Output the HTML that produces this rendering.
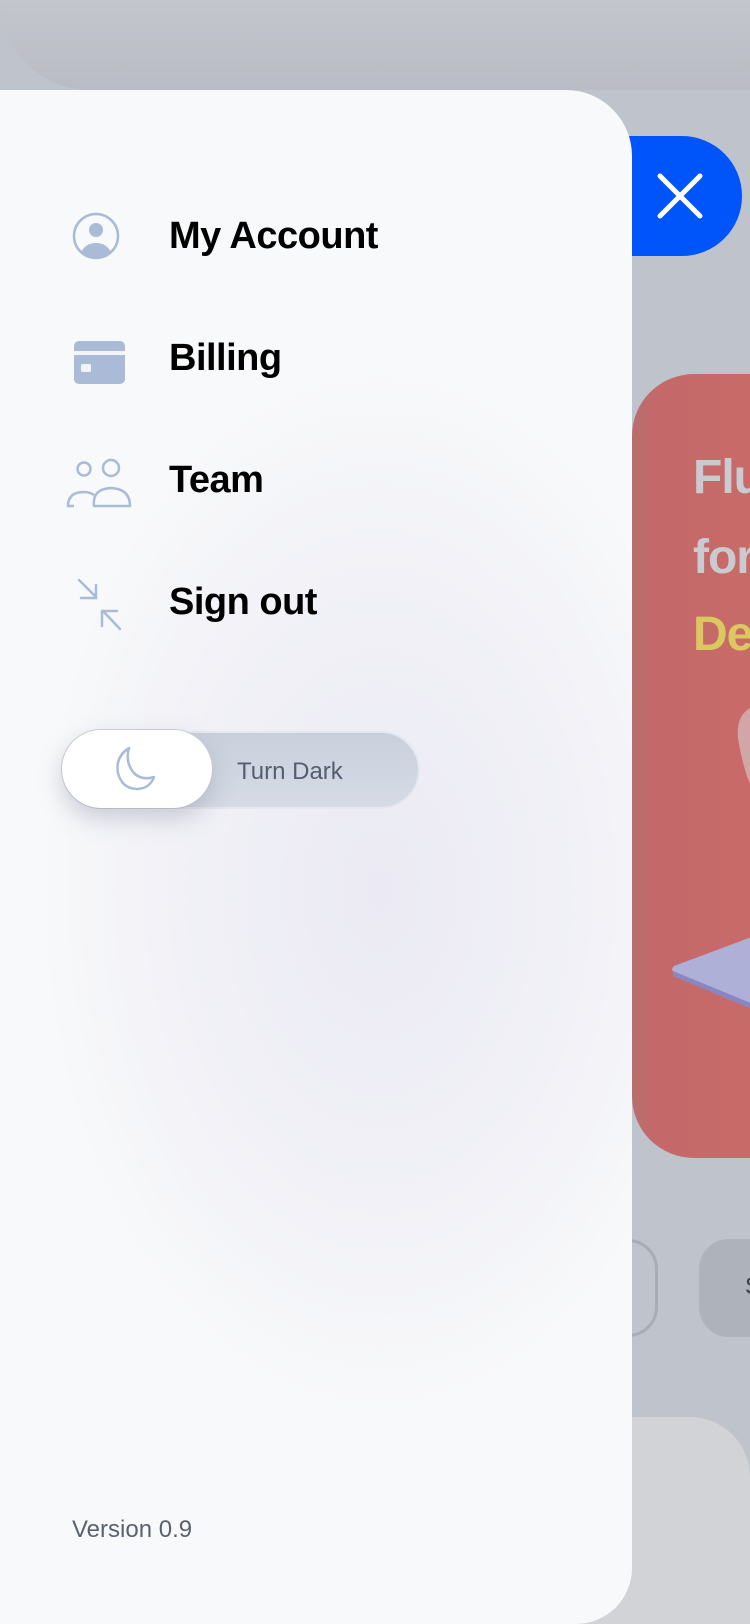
<!DOCTYPE html>
<html><head><meta charset="utf-8"><style>
*{margin:0;padding:0;box-sizing:border-box}
html,body{width:750px;height:1624px;overflow:hidden}
body{position:relative;background:#bfc3cb;font-family:"Liberation Sans",sans-serif}
.top{position:absolute;left:0;top:0;width:750px;height:90px;background:linear-gradient(180deg,#c3c6cd,#b9bcc4);border-bottom-left-radius:90px}
.xbtn{position:absolute;left:560px;top:136px;width:182px;height:120px;background:#0055fa;border-radius:60px}
.red{position:absolute;left:632px;top:374px;width:118px;height:784px;overflow:hidden;background:linear-gradient(90deg,#b86e6e,#c4686a 20%,#c86a68);border-top-left-radius:62px;border-bottom-left-radius:62px}
.red .t{position:absolute;left:61px;font-weight:bold;font-size:48px;color:#c9cbd0;white-space:nowrap;letter-spacing:-1px}
.btn1{position:absolute;left:560px;top:1239px;width:98px;height:98px;border:3px solid #a9acb4;border-radius:30px}
.btn2{position:absolute;left:699px;top:1239px;width:51px;height:98px;background:#aeb2ba;border-radius:30px 0 0 30px;font-size:24px;color:#3a3f4c;padding:34px 0 0 46px;overflow:hidden}
.bot{position:absolute;left:560px;top:1417px;width:190px;height:207px;background:#d2d3d6;border-top-right-radius:60px}
.panel{position:absolute;left:0;top:90px;height:1534px;width:632px;background:radial-gradient(ellipse 340px 520px at 380px 800px,#ebeaf4,#f1f1f7 60%,#f8f9fa);border-top-right-radius:66px;border-bottom-right-radius:56px;z-index:2}
.item{position:absolute;left:169px;font-weight:bold;font-size:38px;color:#000;line-height:40px;letter-spacing:-0.5px}
.ic{position:absolute}
.tog{position:absolute;left:62px;top:731px;width:358px;height:78px;border-radius:39px;background:linear-gradient(180deg,#c9d0dc,#d6dbe5);border:2px solid #e5e8ef}
.knob{position:absolute;left:62px;top:730px;width:150px;height:78px;border-radius:39px;background:#fff;box-shadow:0 10px 24px rgba(120,125,150,.35),0 0 0 1px #cfd2d8}
.td{position:absolute;left:237px;top:758px;font-size:24px;color:#555e6e}
.ver{position:absolute;left:72px;font-size:24px;color:#5a6272}
</style></head><body>
<div class="top"></div>
<div class="xbtn"><svg style="position:absolute;left:94px;top:34px" width="52" height="52" viewBox="0 0 52 52"><path d="M6 6L46 46M46 6L6 46" stroke="#fff" stroke-width="5" stroke-linecap="round"/></svg></div>
<div class="red">
<div class="t" style="top:76px">Flutter</div>
<div class="t" style="top:156px">for</div>
<div class="t" style="top:233px;color:#dcc860">Design</div>
<svg style="position:absolute;left:100px;top:330px" width="18" height="90"><path d="M18 4 Q4 12 6 34 Q10 60 18 80Z" fill="#d4b5b5" opacity=".8"/></svg>
<svg style="position:absolute;left:40px;top:540px" width="78" height="120"><path d="M120 8 L2 52 Q-2 56 2 58 L120 106Z" fill="#aeb0d8"/><path d="M1 57 L1 62 L120 112 L120 106Z" fill="#8b86c0"/></svg>
</div>
<div class="btn1"></div>
<div class="btn2">S</div>
<div class="bot"></div>
<div class="panel">
<svg class="ic" style="left:72px;top:121px" width="48" height="50" viewBox="0 0 48 50"><circle cx="24" cy="25" r="22" fill="none" stroke="#a9bbd6" stroke-width="2.5"/><circle cx="24" cy="19" r="7" fill="#a9bbd6"/><path d="M9 41 Q14 32 24 32 Q34 32 39 41 Q32 47 24 47 Q16 47 9 41Z" fill="#a9bbd6"/></svg>
<div class="item" style="top:126px">My Account</div>
<svg class="ic" style="left:73px;top:250px" width="54" height="46"><rect x="1" y="1" width="51" height="43" rx="5" fill="#a9bbd6"/><rect x="1" y="11" width="51" height="4" fill="#f3f4f8"/><rect x="8" y="24" width="10" height="8" rx="1.5" fill="#f3f4f8"/></svg>
<div class="item" style="top:248px">Billing</div>
<svg class="ic" style="left:66px;top:367px" width="68" height="52" viewBox="0 0 68 52"><circle cx="18" cy="12" r="6.5" fill="none" stroke="#a9bbd6" stroke-width="2.5"/><circle cx="45" cy="11" r="8" fill="none" stroke="#a9bbd6" stroke-width="2.5"/><path d="M8 49 L2 49 Q2 35 18 35 Q24 35 28 38" fill="none" stroke="#a9bbd6" stroke-width="2.5"/><path d="M28 49 Q26 32 45 31 Q64 32 64 49Z" fill="none" stroke="#a9bbd6" stroke-width="2.5" stroke-linejoin="round"/></svg>
<div class="item" style="top:370px">Team</div>
<svg class="ic" style="left:76px;top:487px" width="48" height="56" viewBox="0 0 48 56"><path d="M3 3L20 20M5 21H20V8" fill="none" stroke="#a9bbd6" stroke-width="2.5" stroke-linecap="round"/><path d="M44 52L27 34M26 49V34H41" fill="none" stroke="#a9bbd6" stroke-width="2.5" stroke-linecap="round"/></svg>
<div class="item" style="top:492px">Sign out</div>
<div class="ver" style="top:1426px">Version 0.9</div>
</div>
<div class="tog" style="z-index:3"></div>
<div class="knob" style="z-index:4"><svg style="position:absolute;left:47px;top:15px" width="52" height="50" viewBox="0 0 52 50"><path d="M20 3 Q6 12 9 28 Q13 44 29 44 Q41 43 45 32 Q32 36 24 27 Q16 16 20 3Z" fill="none" stroke="#a9bbd6" stroke-width="2.5" stroke-linejoin="round"/></svg></div>
<div class="td" style="z-index:5">Turn Dark</div>
</body></html>
